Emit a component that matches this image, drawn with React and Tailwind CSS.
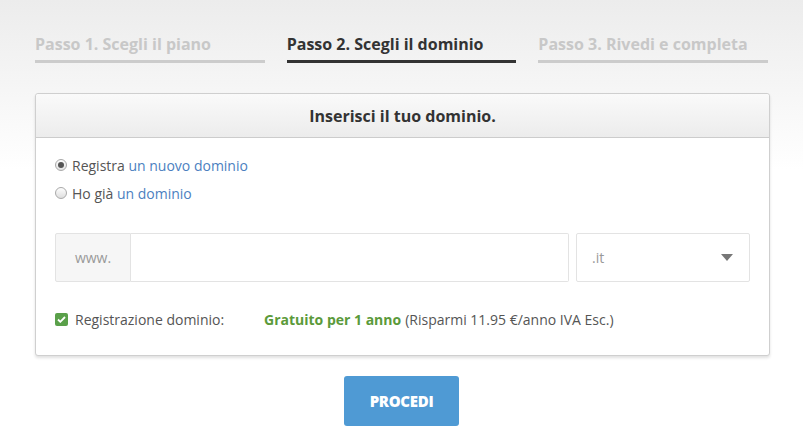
export default function App() {
  const steps = [
    { label: 'Passo 1. Scegli il piano', active: false },
    { label: 'Passo 2. Scegli il dominio', active: true },
    { label: 'Passo 3. Rivedi e completa', active: false },
  ]

  return (
    <div
      className="w-[803px] h-[434px] overflow-hidden bg-[linear-gradient(to_bottom,#ececec_0px,#f6f6f6_90px,#ffffff_170px)]"
      style={{ fontFamily: '"Open Sans", "Liberation Sans", sans-serif' }}
    >
      {/* Steps */}
      <div className="flex gap-[22px] px-[35px] pt-[32px]">
        {steps.map((step) => (
          <div
            key={step.label}
            className={
              step.active
                ? 'w-[231px] h-[31px] border-b-[3px] border-[#333333] text-[#333333]'
                : 'w-[231px] h-[31px] border-b-[3px] border-[#cccccc] text-[#c8c8c8]'
            }
          >
            <span className="text-[16px] font-bold tracking-[0px] leading-[22px]">{step.label}</span>
          </div>
        ))}
      </div>

      {/* Card */}
      <div className="mx-[35px] mt-[30px] w-[735px] rounded-[3px] border border-[#cfcfcf] bg-white shadow-[0_2px_3px_rgba(0,0,0,0.12)]">
        <div className="h-[44px] flex items-center justify-center rounded-t-[3px] border-b border-[#cccccc] bg-[linear-gradient(to_bottom,#fafafa,#ececec)]">
          <span className="text-[16px] font-bold text-[#333333]">Inserisci il tuo dominio.</span>
        </div>

        <div className="px-[19px] pt-[15px] pb-[25px]">
          <label className="flex items-center gap-[5px] h-[24px] text-[14px] text-[#555555]">
            <span className="w-[12px] h-[12px] rounded-full border border-[#a9a9a9] bg-[linear-gradient(to_bottom,#fdfdfd,#e2e2e2)] flex items-center justify-center">
              <span className="w-[6px] h-[6px] rounded-full bg-[#555555]" />
            </span>
            <span>
              Registra <span className="text-[#4c7fbf]">un nuovo dominio</span>
            </span>
          </label>
          <label className="flex items-center gap-[5px] h-[24px] mt-[4px] text-[14px] text-[#555555]">
            <span className="w-[12px] h-[12px] rounded-full border border-[#a9a9a9] bg-[linear-gradient(to_bottom,#fdfdfd,#dedede)]" />
            <span>
              Ho già <span className="text-[#4c7fbf]">un dominio</span>
            </span>
          </label>

          <div className="flex gap-[7px] mt-[28px]">
            <div className="flex w-[514px] h-[49px]">
              <div className="w-[76px] flex items-center justify-center bg-[#f6f6f6] border border-[#e3e3e3] rounded-l-[2px] text-[14px] text-[#999999]">
                www.
              </div>
              <input
                className="flex-1 border border-l-0 border-[#e3e3e3] rounded-r-[2px] outline-none px-3 text-[14px]"
                type="text"
              />
            </div>
            <div className="w-[174px] h-[49px] flex items-center justify-between border border-[#e3e3e3] rounded-[2px] pl-[15px] pr-[16px] text-[14px] text-[#999999]">
              <span>.it</span>
              <svg width="12" height="7" viewBox="0 0 12 7">
                <path d="M0 0h12L6 7z" fill="#777777" />
              </svg>
            </div>
          </div>

          <div className="flex items-center mt-[27px] text-[14px] text-[#555555]">
            <span className="w-[13px] h-[13px] rounded-[2px] bg-[#5aa04a] flex items-center justify-center mr-[7px]">
              <svg width="9" height="7" viewBox="0 0 9 7">
                <path d="M1 3.5l2.3 2.3L8 1" stroke="white" strokeWidth="1.8" fill="none" />
              </svg>
            </span>
            <span className="w-[189px]">Registrazione dominio:</span>
            <span className="font-bold text-[#5b9a3a]">Gratuito per 1 anno</span>
            <span className="ml-[4px]">(Risparmi 11.95 €/anno IVA Esc.)</span>
          </div>
        </div>
      </div>

      {/* Button */}
      <div className="flex justify-center mt-[20px]">
        <button className="w-[115px] h-[50px] rounded-[3px] bg-[#4f9ad4] text-white text-[15px] font-extrabold tracking-[-0.3px]">
          PROCEDI
        </button>
      </div>
    </div>
  )
}
